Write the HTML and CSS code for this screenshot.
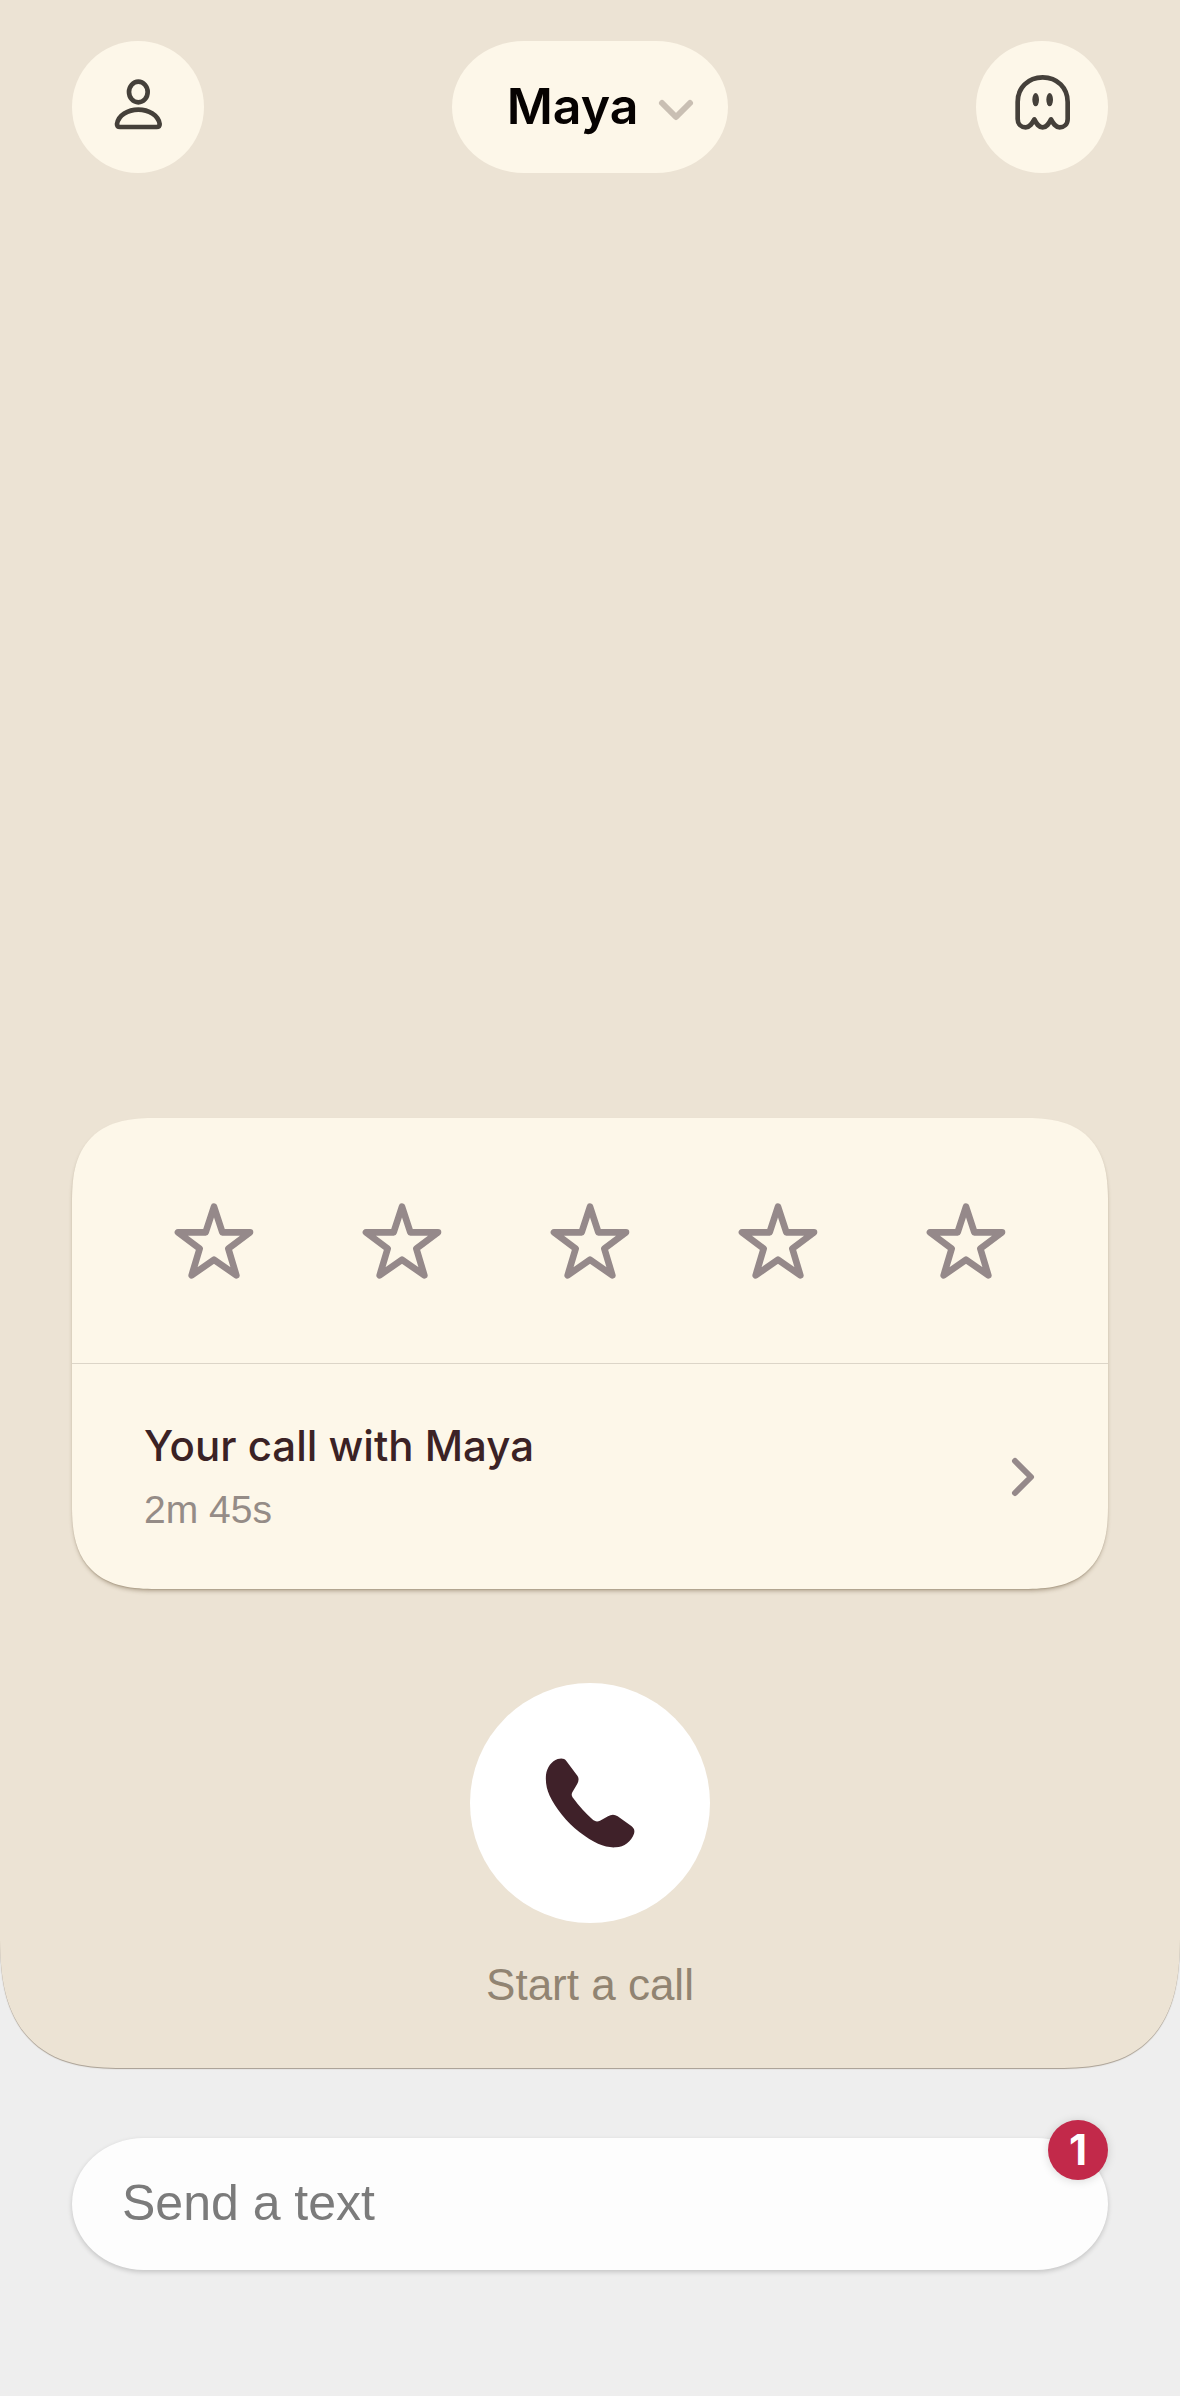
FILE: index.html
```html
<!DOCTYPE html>
<html lang="en">
<head>
    <meta charset="UTF-8">
    <meta name="viewport" content="width=device-width, initial-scale=1.0">
    <title>Maya</title>
    <link rel="stylesheet" href="styles.css">
</head>
<body>
    <main class="call-screen">
        <header class="top-bar">
            <button type="button" class="round-button" aria-label="Profile">
                <svg class="icon" viewBox="0 0 180 180">
                    <ellipse cx="91" cy="45" rx="28" ry="31"/>
                    <path d="M36 150H146Q155 150 155 141C151 115 122 98 91 98C60 98 31 115 27 141Q27 150 36 150Z"/>
                </svg>
            </button>
            <button type="button" class="name-button">
                Maya
                <svg class="chevron-down" viewBox="0 0 36 22"><path d="M4 4L18 18L32 4"/></svg>
            </button>
            <button type="button" class="round-button" aria-label="Incognito">
                <svg class="icon" viewBox="0 0 180 180">
                    <path d="M17 75C17 33 48 1 92 1C136 1 167 33 167 75V126C167 142 156 151 143 151C130 151 124 140 117 127C110 141 104 151 92 151C80 151 74 141 67 127C60 140 54 151 41 151C28 151 17 142 17 126Z"/>
                    <ellipse class="eye" cx="71" cy="68" rx="10" ry="20"/>
                    <ellipse class="eye" cx="113" cy="68" rx="10" ry="20"/>
                </svg>
            </button>
        </header>

        <section class="card">
            <div class="rating">
                <button type="button" class="star" aria-label="1 star"><svg viewBox="0 0 240 240"><path d="M120 17L145 94H228L163 143L187 223L120 176L53 223L77 143L12 94H95Z"/></svg></button>
                <button type="button" class="star" aria-label="2 stars"><svg viewBox="0 0 240 240"><path d="M120 17L145 94H228L163 143L187 223L120 176L53 223L77 143L12 94H95Z"/></svg></button>
                <button type="button" class="star" aria-label="3 stars"><svg viewBox="0 0 240 240"><path d="M120 17L145 94H228L163 143L187 223L120 176L53 223L77 143L12 94H95Z"/></svg></button>
                <button type="button" class="star" aria-label="4 stars"><svg viewBox="0 0 240 240"><path d="M120 17L145 94H228L163 143L187 223L120 176L53 223L77 143L12 94H95Z"/></svg></button>
                <button type="button" class="star" aria-label="5 stars"><svg viewBox="0 0 240 240"><path d="M120 17L145 94H228L163 143L187 223L120 176L53 223L77 143L12 94H95Z"/></svg></button>
            </div>
            <a href="#" class="call-row">
                <span class="call-info">
                    <span class="call-title">Your call with Maya</span>
                    <span class="call-time">2m 45s</span>
                </span>
                <svg class="chevron-right" viewBox="0 0 24 40"><path d="M3 4L19 20L3 36"/></svg>
            </a>
        </section>

        <div class="call">
            <button type="button" class="call-button" id="start-call" aria-labelledby="start-label">
                <svg viewBox="0 0 270 270">
                    <path d="M38 3C50 0 58 1 64 9L96 52C103 61 101 69 97 77L82 103C78 110 81 116 85 121C103 146 123 167 142 184C150 191 157 192 165 188L189 175C199 169 209 169 218 175L259 204C267 210 270 217 267 227C259 250 238 267 212 268C181 270 147 256 104 223C64 191 32 151 14 113C5 94 1 74 3 50C6 28 20 9 38 3Z"/>
                </svg>
            </button>
            <label class="call-label" id="start-label" for="start-call">Start a call</label>
        </div>
    </main>

    <form class="message-bar">
        <div class="message-box">
            <input type="text" class="message-input" placeholder="Send a text" aria-label="Send a text">
            <span class="badge">1</span>
        </div>
    </form>
</body>
</html>
```
FILE: styles.css
```css
* {
    box-sizing: border-box;
}
body {
    margin: 0;
    min-height: 100vh;
    display: flex;
    flex-direction: column;
    background: #eeeeee;
    font-family: "Liberation Sans", Arial, sans-serif;
}
button {
    border: none;
    padding: 0;
    font-family: inherit;
    cursor: pointer;
}
svg {
    display: block;
    fill: none;
    stroke-linecap: round;
    stroke-linejoin: round;
    overflow: visible;
}

/* call screen */
.call-screen {
    flex: 1;
    display: flex;
    flex-direction: column;
    padding: 41px 72px 53px;
    background: #ece3d4;
    border-radius: 0 0 104px 104px;
    box-shadow: 0 1px 1px #a69c8f;
}
.top-bar {
    display: flex;
    justify-content: space-between;
    align-items: center;
}
.round-button {
    width: 132px;
    height: 132px;
    display: flex;
    align-items: center;
    justify-content: center;
    border-radius: 50%;
    background: #fdf7e9;
}
.icon {
    width: 60px;
    height: 60px;
    stroke: #45403a;
    stroke-width: 14;
}
.eye {
    fill: #45403a;
    stroke: none;
}
.name-button {
    height: 132px;
    display: flex;
    align-items: center;
    gap: 20px;
    padding: 0 34px 2px 55px;
    border-radius: 72px / 66px;
    background: #fdf7e9;
    color: #060201;
    font-family: Inter, sans-serif;
    font-size: 50px;
    font-weight: 600;
}
.chevron-down {
    width: 36px;
    height: 22px;
    margin-top: 8px;
    stroke: #c9bfb3;
    stroke-width: 6;
}

/* last call card */
.card {
    margin-top: auto;
    border-radius: 72px;
    background: #fdf7e9;
    box-shadow: 0 3px 4px -1px rgba(90, 70, 40, 0.4), 0 1px 1px rgba(90, 70, 40, 0.15);
}
.rating {
    display: flex;
    justify-content: space-between;
    align-items: center;
    height: 246px;
    padding: 0 102px;
    border-bottom: 1px solid #dcd5c8;
}
.star {
    width: 80px;
    height: 80px;
    background: none;
    stroke: #95898a;
    stroke-width: 20;
}
.call-row {
    display: flex;
    justify-content: space-between;
    align-items: center;
    height: 225px;
    padding: 0 72px;
    text-decoration: none;
}
.call-info {
    display: flex;
    flex-direction: column;
    gap: 8px;
    padding-top: 2px;
}
.call-title {
    font-family: Inter, sans-serif;
    font-size: 42px;
    font-weight: 500;
    line-height: 56px;
    color: #3b2225;
}
.call-time {
    font-size: 39px;
    line-height: 56px;
    color: #958c87;
}
.chevron-right {
    width: 24px;
    height: 40px;
    stroke: #95898a;
    stroke-width: 6;
}

/* start call */
.call {
    display: flex;
    flex-direction: column;
    align-items: center;
    gap: 32px;
    margin-top: 94px;
}
.call-button {
    width: 240px;
    height: 240px;
    display: flex;
    align-items: center;
    justify-content: center;
    border-radius: 50%;
    background: #fff;
}
.call-button svg {
    width: 90px;
    height: 90px;
    fill: #3f2129;
}
.call-label {
    font-size: 44px;
    line-height: 60px;
    color: #918472;
}

/* text message */
.message-bar {
    padding: 70px 72px 126px;
}
.message-box {
    position: relative;
}
.message-input {
    display: block;
    width: 100%;
    height: 132px;
    padding: 0 50px 2px;
    border: none;
    border-radius: 72px / 66px;
    background: #fdfdfd;
    box-shadow: 0 2px 5px rgba(0, 0, 0, 0.18);
    font-family: inherit;
    font-size: 50px;
}
.message-input::placeholder {
    color: #7b7b7b;
}
.badge {
    position: absolute;
    top: -18px;
    right: 0;
    width: 60px;
    height: 60px;
    border-radius: 50%;
    background: #c2294a;
    box-shadow: 0 1px 10px rgba(0, 0, 0, 0.15);
    color: #fff;
    font-family: Inter, sans-serif;
    font-size: 42px;
    font-weight: 700;
    line-height: 60px;
    text-align: center;
}

/* smoother corners where the browser has them */
@supports (corner-shape: superellipse(1.4)) {
    .call-screen {
        border-radius: 0 0 122px 122px / 0 0 134px 134px;
        corner-shape: superellipse(1.4);
    }
    .card {
        border-radius: 84px;
        corner-shape: superellipse(1.4);
    }
}
```
